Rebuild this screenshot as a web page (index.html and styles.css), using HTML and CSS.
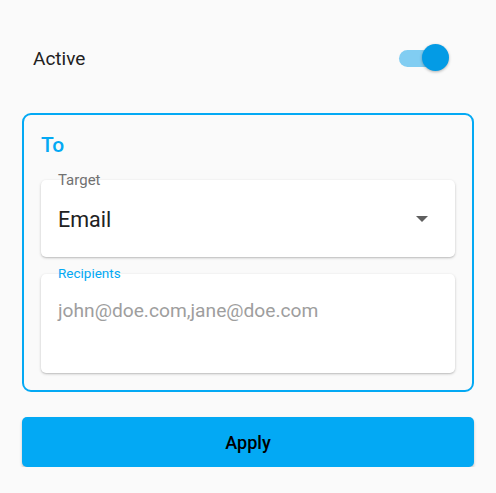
FILE: index.html
```html
<!DOCTYPE html>
<html lang="en">
<head>
    <meta charset="UTF-8">
    <meta name="viewport" content="width=device-width, initial-scale=1.0">
    <title>Notification</title>
    <link rel="stylesheet" href="styles.css">
</head>
<body>
    <div class="page">
        <div class="switch-row">
            <span class="switch-label">Active</span>
            <div class="switch">
                <div class="switch-track"></div>
                <div class="switch-thumb"></div>
            </div>
        </div>

        <div class="section">
            <h2 class="section-title">To</h2>

            <div class="field">
                <span class="field-label">Target</span>
                <div class="field-box select-box">
                    <span class="field-value">Email</span>
                    <span class="caret"></span>
                </div>
            </div>

            <div class="field">
                <span class="field-label focused">Recipients</span>
                <div class="field-box text-box">
                    <span class="placeholder">john@doe.com,jane@doe.com</span>
                </div>
            </div>
        </div>

        <button type="button" class="apply-btn">Apply</button>
    </div>
</body>
</html>
```

FILE: styles.css
```css
* {
    margin: 0;
    padding: 0;
    box-sizing: border-box;
}
body {
    font-family: Roboto, "Noto Sans", sans-serif;
    background-color: #fafafa;
    color: #212121;
}
.page {
    padding: 36px 22px 0;
    display: flex;
    flex-direction: column;
}
.switch-row {
    height: 44px;
    display: flex;
    align-items: center;
    justify-content: space-between;
    padding-left: 11px;
    padding-right: 25px;
}
.switch-label {
    font-size: 19px;
}
.switch {
    position: relative;
    width: 50px;
    height: 28px;
    display: flex;
    align-items: center;
}
.switch-track {
    width: 42px;
    height: 17px;
    border-radius: 9px;
    background-color: #81cdf2;
}
.switch-thumb {
    position: absolute;
    right: 0;
    top: 0;
    width: 27px;
    height: 27px;
    border-radius: 50%;
    background-color: #039be5;
    box-shadow: 0 1px 3px rgba(0, 0, 0, 0.3);
}
.section {
    margin-top: 33px;
    border: 2px solid #03a9f4;
    border-radius: 9px;
    padding: 18px 17px 17px;
    display: flex;
    flex-direction: column;
    gap: 17px;
}
.section-title {
    font-size: 21px;
    line-height: 24px;
    font-weight: 500;
    color: #03a9f4;
    margin-bottom: 6px;
}
.field {
    position: relative;
}
.field-label {
    position: absolute;
    left: 17px;
    top: -9px;
    font-size: 15px;
    line-height: 18px;
    color: #717171;
    z-index: 1;
}
.field-label.focused {
    font-size: 13.5px;
    top: -10px;
    color: #03a9f4;
}
.field-box {
    background-color: #fff;
    border-radius: 5px;
    box-shadow: 0 1px 3px rgba(0, 0, 0, 0.2), 0 1px 1px rgba(0, 0, 0, 0.08);
    padding: 0 17px;
}
.select-box {
    height: 77px;
    display: flex;
    align-items: center;
    justify-content: space-between;
    padding-top: 1px;
}
.field-value {
    font-size: 21.5px;
}
.caret {
    width: 0;
    height: 0;
    border-left: 6.5px solid transparent;
    border-right: 6.5px solid transparent;
    border-top: 6px solid #5f5f5f;
    margin-right: 10px;
}
.text-box {
    height: 99px;
    padding-top: 25px;
}
.placeholder {
    font-size: 19.2px;
    line-height: 24px;
    color: #9e9e9e;
}
.apply-btn {
    margin-top: 25px;
    height: 50px;
    border: none;
    border-radius: 5px;
    background-color: #03a9f4;
    color: #000;
    font-family: Roboto, "Noto Sans", sans-serif;
    font-size: 18px;
    font-weight: 500;
    box-shadow: 0 2px 3px rgba(0, 0, 0, 0.22);
}
```
